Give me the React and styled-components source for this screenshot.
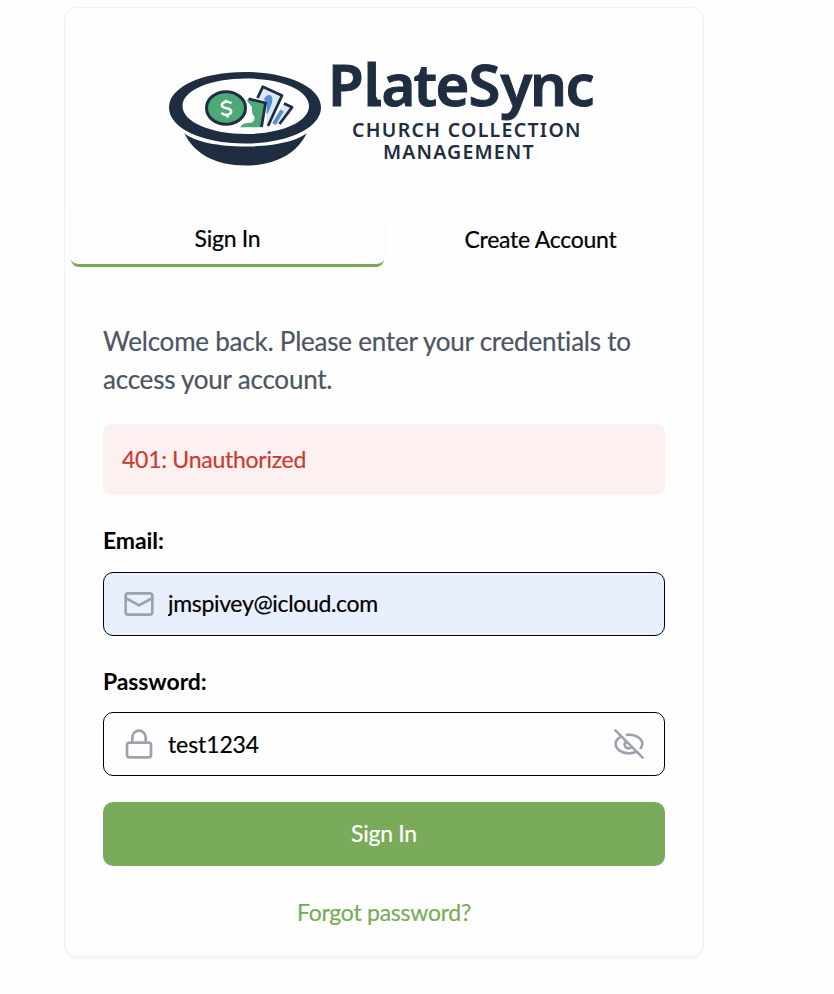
import React from 'react';
import styled, { createGlobalStyle } from 'styled-components';

const GlobalStyle = createGlobalStyle`
  * { box-sizing: border-box; }
  body { margin: 0; background: #fefefe; }
  button, input { font: inherit; letter-spacing: inherit; }
`;

const Page = styled.main`
  min-height: 994px;
  padding: 8px 0 0 65px;
  font-family: Lato, sans-serif;
  font-size: 23px;
  letter-spacing: -0.26px;
  font-variant-ligatures: none;
  -webkit-text-stroke: 0.2px currentColor;
  color: #000;
`;

const Card = styled.section`
  width: 638px;
  height: 948px;
  border-radius: 12px;
  background: #fefefe;
  box-shadow: 0 0 0 1px #f1f1f1, 0 2px 4px rgba(0, 0, 0, 0.06);
`;

const Brand = styled.header`
  display: flex;
  padding: 22px 0 0 95px;
  height: 205px;
`;

const Tabs = styled.nav`
  display: grid;
  grid-template-columns: 313px 313px;
  padding: 0 6px;
`;

const Tab = styled.button`
  height: 54px;
  padding: 0 0 2px;
  border: 0;
  border-bottom: ${p => (p.$active ? '3px solid #7aab5a' : '0')};
  border-radius: 8px;
  background: transparent;
  box-shadow: ${p => (p.$active ? '0 1px 3px rgba(0, 0, 0, 0.05)' : 'none')};
  color: #000;
`;

const Form = styled.form`
  display: flex;
  flex-direction: column;
  padding: 55px 38px 0;
`;

const Intro = styled.p`
  margin: 0;
  height: 102px;
  font-size: 26px;
  line-height: 38px;
  letter-spacing: -0.22px;
  color: #4b5563;
  white-space: nowrap;
`;

const Alert = styled.div`
  display: flex;
  align-items: center;
  height: 71px;
  padding: 0 20px 2px 19px;
  border-radius: 9px;
  background: #fcf1f0;
  color: #cb3a31;
`;

const Label = styled.label`
  margin-top: ${p => p.$gap}px;
  height: 32px;
  line-height: 32px;
  font-weight: 700;
  letter-spacing: -0.1px;
  -webkit-text-stroke: 0;
`;

const Field = styled.div`
  display: flex;
  align-items: center;
  height: 64px;
  margin-top: ${p => p.$gap}px;
  padding: 0 19px;
  border: 1px solid #000;
  border-radius: 10px;
  background: ${p => (p.$filled ? '#e8effd' : '#fefefe')};
  color: #9ca3af;
`;

const Input = styled.input`
  flex: 1;
  min-width: 0;
  margin-left: 13px;
  padding: 0 0 ${p => p.$lift || 0}px;
  border: 0;
  outline: 0;
  background: transparent;
  letter-spacing: ${p => p.$tracking}px;
  color: #000;
`;

const Submit = styled.button`
  height: 64px;
  margin-top: 26px;
  padding: 0 0 2px;
  border: 0;
  border-radius: 10px;
  background: #7aab5a;
  color: #fff;
`;

const Forgot = styled.a`
  align-self: center;
  margin-top: 32px;
  line-height: 28px;
  color: #7aab5a;
`;

const Icon = ({ children }) => (
  <svg width="32" height="32" viewBox="0 0 24 24" fill="none" stroke="currentColor"
    strokeWidth="2" strokeLinecap="round" strokeLinejoin="round">{children}</svg>
);

const LogoSvg = styled.svg`
  letter-spacing: 0;
  -webkit-text-stroke: 0;
`;

const Wordmark = styled.text`
  font: 600 58px 'Noto Sans', sans-serif;
  stroke: #1e2d40;
  stroke-width: 1px;
`;

const Tagline = styled.text`
  font: 600 19.5px 'Noto Sans', sans-serif;
`;

const Logo = () => (
  <LogoSvg width="450" height="150" viewBox="160 30 450 150" role="img" aria-label="PlateSync">
    <g fill="#1e2d40">
      <path d="M184.300 133C204 151 286 151 306.700 133C297 154 275 165.500 245.500 165.500S194 154 184.300 133Z" />
      <path fillRule="evenodd" d="M245 72C288 72 321 87 321 107.500S288 143.500 245 143.500S169 128 169 107.500S202 72 245 72ZM246 78.500C211 78.500 182.500 90 182.500 106S211 134 246 134S309 122 309 106S281 78.500 246 78.500Z" />
    </g>
    <g stroke="#1e2d40" strokeWidth="2.800" strokeLinejoin="round">
      <path d="M284 104L292.500 107.500L279 124.500L272 124Z" fill="#dce8f5" stroke="none" />
      <path d="M284 103.500L292 107.300L279.500 124" fill="none" />
      <path d="M282 110.500L274 124" stroke="#578fd4" strokeWidth="4" />
      <path d="M262 86.500L282.500 95.500L267.500 126L265 102L257 98Z" fill="#dce8f5" stroke="none" />
      <path d="M257.500 98L262.800 86.800L282 95.500L268 126" fill="none" />
      <path d="M264 99Q267 93.500 271 95.500Q274 99 270.500 107L268 113L266.500 114Q268 104 264 99Z" fill="#578fd4" stroke="none" />
    </g>
    <path d="M246 99.500L265 103.500L261.500 127.300H240Q243 122.500 249 123Q255 122.500 254.500 117Q251 113 252 107Z" fill="#4da978" />
    <path d="M248.500 98.800L265.500 103L261.500 127" fill="none" stroke="#1e2d40" strokeWidth="2.800" />
    <ellipse cx="226" cy="107.500" rx="22.500" ry="19.500" fill="#fefefe" />
    <ellipse cx="226" cy="108" rx="19.500" ry="16.300" fill="#4da978" stroke="#1e2d40" strokeWidth="3" />
    <path d="M231.500 103.200Q228 100.800 224.500 102.200C220 104 221.500 107.700 226.500 108.300C232.500 109 232.500 113.800 227.500 114.800Q223.500 115.300 221.500 112.800M226 99.800V102M227.500 115V117.600" fill="none" stroke="#fff" strokeWidth="2.500" />
    <g fill="#1e2d40">
      <Wordmark x="328 363.500 381.500 413.500 435.500 468.500 500.500 530 565.500" y="105.500">PlateSync</Wordmark>
      <path d="M368.300 94Q368.300 106.500 377 106.500H381V99.800H378.500Q376.700 99.800 376.700 97Z" />
      <Tagline x="352" y="136.700" textLength="228.500" lengthAdjust="spacing">CHURCH COLLECTION</Tagline>
      <Tagline x="383" y="159.300" textLength="150.500" lengthAdjust="spacing">MANAGEMENT</Tagline>
    </g>
  </LogoSvg>
);

export default function App() {
  return (
    <>
      <GlobalStyle />
      <Page>
        <Card>
          <Brand><Logo /></Brand>
          <Tabs>
            <Tab $active>Sign In</Tab>
            <Tab>Create Account</Tab>
          </Tabs>
          <Form onSubmit={e => e.preventDefault()}>
            <Intro>Welcome back. Please enter your credentials to<br />access your account.</Intro>
            <Alert>401: Unauthorized</Alert>
            <Label htmlFor="email" $gap={29}>Email:</Label>
            <Field $filled $gap={16}>
              <Icon>
                <rect x="2" y="4" width="20" height="16" rx="2" />
                <path d="M2 7.500L12 13L22 7.500" />
              </Icon>
              <Input id="email" $tracking={-0.33} $lift={2} defaultValue="jmspivey@icloud.com" />
            </Field>
            <Label htmlFor="password" $gap={29}>Password:</Label>
            <Field $gap={15}>
              <Icon>
                <rect x="3" y="11" width="18" height="11" rx="2" />
                <path d="M7 11V7a5 5 0 0 1 10 0v4" />
              </Icon>
              <Input id="password" $tracking={-0.1} defaultValue="test1234" />
              <Icon>
                <path d="M1.800 1.800l20.400 20.400M10.500 5.200C16.500 4.400 22 7.800 22 12q0 1.500-1.200 3M5.600 6.700C3.200 8 2 10 2 12C2 16 6.500 19 12 19Q15 19 17.500 17.800M9.900 9.900a3 3 0 1 0 4.200 4.200" />
              </Icon>
            </Field>
            <Submit>Sign In</Submit>
            <Forgot>Forgot password?</Forgot>
          </Form>
        </Card>
      </Page>
    </>
  );
}
